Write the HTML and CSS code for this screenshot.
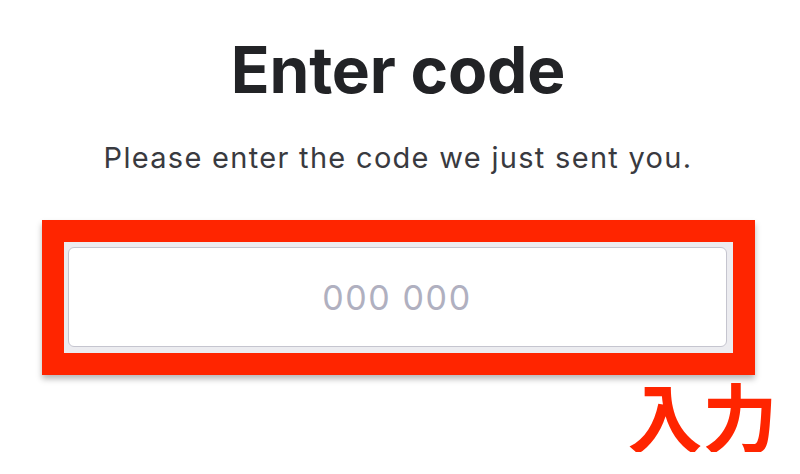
FILE: index.html
```html
<!DOCTYPE html>
<html lang="en">
<head>
<meta charset="utf-8">
<title>Enter code</title>
<link rel="stylesheet" href="styles.css">
</head>
<body>
<main class="page">
  <h1 class="title">Enter code</h1>
  <p class="subtitle">Please enter the code we just sent you.</p>
  <div class="field-area">
    <div class="highlight">
      <div class="focus-ring">
        <input class="code-input" type="text" placeholder="000 000">
      </div>
    </div>
    <div class="note" lang="ja">入力</div>
  </div>
</main>
</body>
</html>
```
FILE: styles.css
```css
html, body {
  margin: 0;
  padding: 0;
  background: #ffffff;
}

.page {
  display: flex;
  flex-direction: column;
  align-items: center;
  padding: 38px 4px 0 0;
  font-family: Inter, "Noto Sans", sans-serif;
}

.title {
  margin: 0;
  font-size: 64px;
  line-height: 64px;
  font-weight: 700;
  color: #222326;
  letter-spacing: -0.2px;
}

.subtitle {
  margin: 41px 0 0;
  font-size: 29px;
  line-height: 29px;
  font-weight: 400;
  color: #393a40;
  letter-spacing: 1.3px;
}

.field-area {
  margin-top: 48px;
  width: 713px;
  display: flex;
  flex-direction: column;
}

.highlight {
  box-sizing: border-box;
  width: 713px;
  height: 155px;
  border: 22px solid #ff2500;
  box-shadow: 0 4px 6px rgba(0, 0, 0, 0.28);
  background: #ffffff;
}

.focus-ring {
  box-sizing: border-box;
  height: 100%;
  padding: 5px 6px 6px 4px;
  background: #ececf0;
}

.code-input {
  box-sizing: border-box;
  display: block;
  width: 100%;
  height: 100%;
  margin: 0;
  border: 1.5px solid #c5c5cf;
  border-radius: 6px;
  background: #ffffff;
  font-family: Inter, "Noto Sans", sans-serif;
  font-size: 34px;
  letter-spacing: 1.6px;
  text-align: center;
  color: #222326;
  outline: none;
}

.code-input::placeholder {
  color: #b0b0c0;
}

.note {
  align-self: flex-end;
  margin: 2px -23px 0 0;
  font-family: "Noto Sans CJK JP", sans-serif;
  font-size: 75px;
  line-height: 75px;
  font-weight: 700;
  color: #ff2500;
}
```
